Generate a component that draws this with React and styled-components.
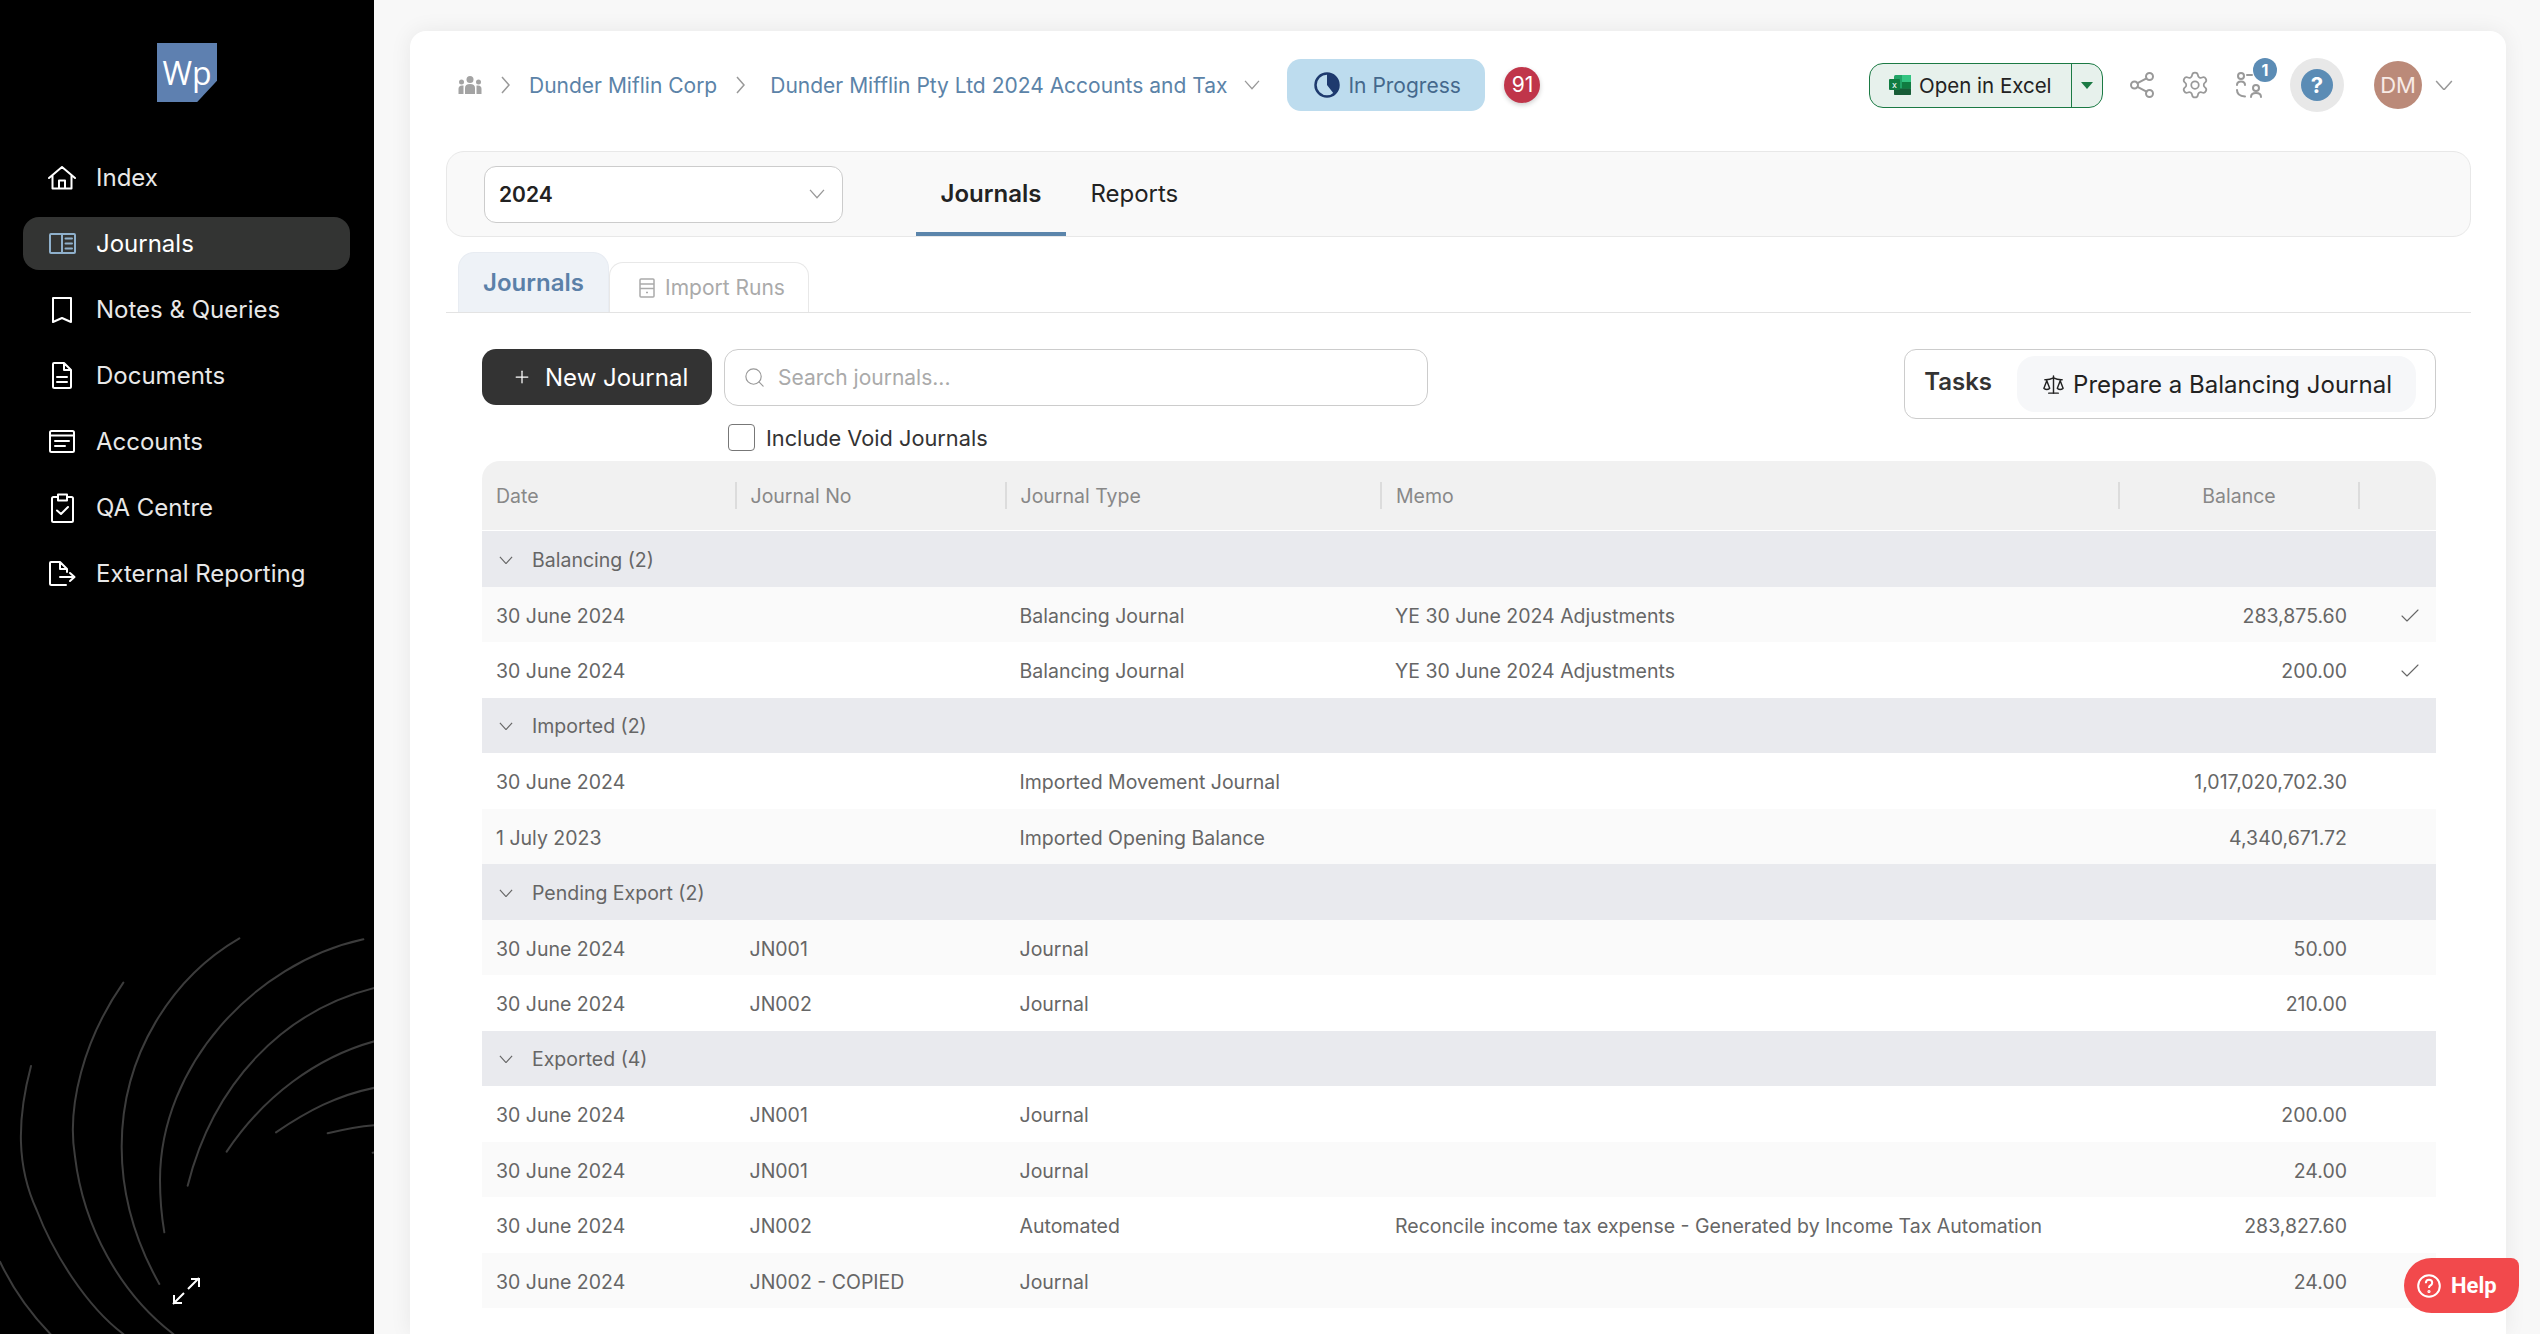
import React from 'react'
import styled, { createGlobalStyle } from 'styled-components'
import { Check, Plus, Scale, Search, Settings } from 'lucide-react'

const GlobalStyle = createGlobalStyle`
  html, body {
    margin: 0;
    height: 100%;
    overflow: hidden;
    background: #f8f8f8;
    font-family: Inter, "Liberation Sans", sans-serif;
  }
  * { box-sizing: border-box; }
`

const Page = styled.div`
  display: flex;
  height: 100vh;
`

/* sidebar */

const Sidebar = styled.aside`
  position: relative;
  width: 374px;
  flex-shrink: 0;
  background: #000;
  display: flex;
  flex-direction: column;
  padding: 43px 24px 29px 23px;
  overflow: hidden;
`

const Logo = styled.div`
  width: 60px;
  height: 59px;
  margin-left: 134px;
  background: #5e80b0;
  clip-path: polygon(0 0, 100% 0, 100% 64%, 67% 100%, 0 100%);
  color: #fff;
  font-family: "Open Sans", sans-serif;
  font-size: 32px;
  line-height: 59px;
  text-align: center;
`

const NavList = styled.nav`
  display: flex;
  flex-direction: column;
  gap: 13px;
  margin-top: 49px;
`

const NavItem = styled.a`
  display: flex;
  align-items: center;
  gap: 19px;
  height: 53px;
  padding-left: 24px;
  border-radius: 16px;
  background: ${p => (p.$active ? '#333433' : 'transparent')};
  color: ${p => (p.$active ? '#fff' : '#e8e8e8')};
  font-size: 24px;
  position: relative;
  z-index: 1;
`

const NavGlyph = styled.span`
  width: 30px;
  display: flex;
  justify-content: center;
  svg {
    fill: none;
    stroke: ${p => p.$color || '#fff'};
    stroke-width: 2;
    stroke-linejoin: round;
    stroke-linecap: round;
  }
`

const Spiral = styled.svg`
  position: absolute;
  left: 0;
  bottom: 0;
  width: 374px;
  height: 454px;
  fill: none;
  stroke: #3c3c3c;
  stroke-width: 6;
  stroke-linecap: round;
`

const Expand = styled.svg`
  position: relative;
  margin-top: auto;
  align-self: center;
  margin-left: -1px;
  fill: none;
  stroke: #fff;
  stroke-width: 2;
`

const spiralArcs = [
  'M93 558 C50 720 50 860 110 990 C160 1120 260 1280 370 1362',
  'M370 308 C250 480 200 680 225 830 C250 1040 360 1240 520 1362',
  'M718 175 C520 290 365 520 365 800 C365 960 415 1100 478 1212',
  'M1090 178 C760 250 480 560 480 900 C480 960 485 1010 493 1057',
  'M1130 322 C850 390 640 610 563 917',
  'M1130 482 C950 530 790 650 680 815',
  'M1130 622 C1010 645 920 695 828 757',
  'M1130 735 C1070 738 1030 748 983 760',
  'M1118 818 L1130 816',
  'M0 1145 C40 1230 100 1310 155 1366',
]

const navItems = [
  {
    label: 'Index',
    icon: (
      <svg width="28" height="24" viewBox="0 0 28 24">
        <path d="M1 12 L14 1 L27 12 M4.5 9.5 V22.5 H23.5 V9.5 M11 22.5 V14.5 H17 V22.5" />
      </svg>
    ),
  },
  {
    label: 'Journals',
    active: true,
    color: '#8fb0cc',
    icon: (
      <svg width="27" height="21" viewBox="0 0 27 21">
        <rect x="1" y="1" width="25" height="19" rx="1" />
        <path d="M13 1 V20 M16.5 5.5 H23 M16.5 10.5 H23 M16.5 15.5 H23" />
      </svg>
    ),
  },
  {
    label: 'Notes & Queries',
    icon: (
      <svg width="20" height="26" viewBox="0 0 20 26">
        <path d="M1 1 H19 V25 L10 21 L1 25 Z" />
      </svg>
    ),
  },
  {
    label: 'Documents',
    icon: (
      <svg width="20" height="27" viewBox="0 0 20 27">
        <path d="M2 1 H12 L19 8 V24.5 Q19 26 17.5 26 H2.5 Q1 26 1 24.5 V2 Q1 1 2 1 Z M12 1 V8 H19 M5 15 H15 M5 20 H15" />
      </svg>
    ),
  },
  {
    label: 'Accounts',
    icon: (
      <svg width="26" height="23" viewBox="0 0 26 23">
        <rect x="1" y="1" width="24" height="21" rx="1.5" />
        <path d="M1 5.5 H25 M6 11 H20 M6 16 H16" />
      </svg>
    ),
  },
  {
    label: 'QA Centre',
    icon: (
      <svg width="23" height="30" viewBox="0 0 23 30">
        <path d="M7 4 H2.5 Q1 4 1 5.5 V27.5 Q1 29 2.5 29 H20.5 Q22 29 22 27.5 V5.5 Q22 4 20.5 4 H16 M7 1.5 H16 V7.5 H7 Z M6 17.5 L10 21 L17 14" />
      </svg>
    ),
  },
  {
    label: 'External Reporting',
    icon: (
      <svg width="27" height="25" viewBox="0 0 27 25">
        <path d="M17 24 H2.5 Q1 24 1 22.5 V2 Q1 1 2 1 H11 L18 8 V11 M11 1 V8 H18 M11 16 H25 M21 12 L25.5 16 L21 20" />
      </svg>
    ),
  },
]

/* card + header */

const Main = styled.main`
  flex: 1;
  min-width: 0;
  padding: 31px 34px 0 36px;
`

const Card = styled.div`
  height: 100%;
  padding: 27px 35px 0 36px;
  background: #fff;
  border-radius: 16px 16px 0 0;
  box-shadow: 0 0 22px rgba(0, 0, 0, 0.07);
`

const Header = styled.header`
  display: flex;
  align-items: center;
  justify-content: space-between;
  height: 54px;
  padding: 0 18px 0 12px;
`

const HeaderGroup = styled.div`
  display: flex;
  align-items: center;
`

const CrumbLink = styled.span`
  color: #5b83a8;
  font-size: 21px;
  white-space: nowrap;
`

const CrumbSep = styled.svg`
  margin: 0 ${p => p.$gap || 19}px 0 19px;
  fill: none;
  stroke: #999;
  stroke-width: 1.5;
`

const Chevron = styled.svg`
  flex-shrink: 0;
  margin-left: ${p => p.$left || 0}px;
  fill: none;
  stroke: ${p => p.$color || '#999'};
  stroke-width: 1.5;
`

const StatusPill = styled.div`
  display: flex;
  align-items: center;
  gap: 8px;
  width: 198px;
  height: 52px;
  margin-left: 27px;
  padding-left: 27px;
  border-radius: 14px;
  background: #bddcee;
  color: #44688c;
  font-size: 21px;
`

const CountBadge = styled.div`
  width: 36px;
  height: 36px;
  margin-left: 19px;
  border-radius: 50%;
  background: #c0354a;
  box-shadow: 0 2px 5px rgba(0, 0, 0, 0.2);
  color: #fff;
  font-size: 21px;
  line-height: 36px;
  text-align: center;
`

const Actions = styled.div`
  display: flex;
  align-items: center;
  gap: 28px;
`

const ExcelButton = styled.div`
  display: flex;
  align-items: stretch;
  width: 234px;
  height: 45px;
  border: 1.5px solid #1b7a44;
  border-radius: 14px;
  background: #e7f1ec;
  color: #222;
  font-size: 20.5px;
`

const ExcelMain = styled.div`
  flex: 1;
  display: flex;
  align-items: center;
  gap: 8px;
  padding-left: 19px;
  border-right: 1.5px solid #1b7a44;
`

const ExcelCaret = styled.div`
  width: 30px;
  display: flex;
  align-items: center;
  justify-content: center;
  &::after {
    content: '';
    border-top: 7px solid #1b7a44;
    border-left: 6px solid transparent;
    border-right: 6px solid transparent;
  }
`

const IconSlot = styled.div`
  position: relative;
  width: ${p => p.$width || 26}px;
  height: 26px;
  margin-left: ${p => p.$left || 0}px;
  display: flex;
  align-items: center;
  justify-content: center;
  color: #999;
  svg { flex-shrink: 0; }
`

const LineIcon = styled.svg`
  fill: none;
  stroke: #999;
  stroke-width: 2;
  stroke-linecap: round;
`

const SlotBadge = styled.span`
  position: absolute;
  left: 17px;
  top: -14px;
  width: 24px;
  height: 24px;
  border-radius: 50%;
  background: #5b8cb5;
  color: #fff;
  font-size: 16px;
  font-weight: 700;
  line-height: 24px;
  text-align: center;
`

const HelpRing = styled.div`
  width: 54px;
  height: 54px;
  margin-right: 2px;
  border-radius: 50%;
  background: #e8e8e8;
  display: flex;
  align-items: center;
  justify-content: center;
`

const HelpDot = styled.div`
  width: 32px;
  height: 32px;
  border-radius: 50%;
  background: #5b8cb5;
  color: #fff;
  font-size: 22px;
  font-weight: 700;
  line-height: 32px;
  text-align: center;
`

const UserMenu = styled.div`
  display: flex;
  align-items: center;
  gap: 13px;
`

const Avatar = styled.div`
  width: 48px;
  height: 48px;
  border-radius: 50%;
  background: #bb8a79;
  color: #f8ebe6;
  font-size: 22px;
  line-height: 48px;
  text-align: center;
`

/* year bar + tabs */

const YearBar = styled.div`
  display: flex;
  align-items: stretch;
  height: 86px;
  margin-top: 39px;
  padding-left: 37px;
  background: #f9f9f9;
  border: 1.5px solid #e8e8e8;
  border-radius: 18px;
`

const YearSelect = styled.div`
  align-self: center;
  display: flex;
  align-items: center;
  justify-content: space-between;
  width: 359px;
  height: 57px;
  padding: 0 17px 0 14px;
  background: #fff;
  border: 1.5px solid #ccc;
  border-radius: 12px;
  color: #222;
  font-size: 21px;
  font-weight: 600;
`

const TopTabs = styled.div`
  display: flex;
  margin-left: 73px;
`

const TopTab = styled.div`
  display: flex;
  align-items: center;
  padding: 2px 24.5px 0;
  border-bottom: 4px solid ${p => (p.$active ? '#5b85ab' : 'transparent')};
  color: #222;
  font-size: 24px;
  font-weight: ${p => (p.$active ? 600 : 400)};
`

const SubTabs = styled.div`
  display: flex;
  align-items: flex-end;
  height: 61px;
  margin-top: 15px;
  padding-left: 12px;
  border-bottom: 1.5px solid #e3e3e3;
`

const ActiveSubTab = styled.div`
  width: 151px;
  height: 60px;
  padding-left: 24px;
  background: #eef2f7;
  border: 1.5px solid #e8ecf2;
  border-bottom: 0;
  border-radius: 16px 16px 0 0;
  color: #5b80a8;
  font-size: 24px;
  font-weight: 600;
  line-height: 59px;
`

const SubTab = styled.div`
  display: flex;
  align-items: center;
  gap: 10px;
  width: 200px;
  height: 50px;
  padding-left: 29px;
  border: 1.5px solid #e8e8e8;
  border-bottom: 0;
  border-radius: 14px 14px 0 0;
  color: #aaa;
  font-size: 21px;
`

/* toolbar */

const Toolbar = styled.div`
  display: flex;
  align-items: flex-start;
  justify-content: space-between;
  margin-top: 36px;
  padding: 0 35px 0 36px;
`

const ToolbarLeft = styled.div`
  display: grid;
  grid-template-columns: 230px 704px;
  column-gap: 12px;
  row-gap: 18px;
`

const NewButton = styled.div`
  display: flex;
  align-items: center;
  gap: 13px;
  height: 56px;
  padding-left: 30px;
  background: #333;
  border-radius: 14px;
  color: #fff;
  font-size: 24px;
`

const SearchBox = styled.div`
  display: flex;
  align-items: center;
  gap: 12px;
  height: 57px;
  padding-left: 18px;
  border: 1.5px solid #ccc;
  border-radius: 14px;
  color: #aaa;
  font-size: 21px;
`

const VoidOption = styled.label`
  grid-column: 2;
  display: flex;
  align-items: center;
  gap: 11px;
  padding-left: 4px;
  color: #333;
  font-size: 21.75px;
`

const CheckBox = styled.span`
  width: 27px;
  height: 27px;
  border: 1.5px solid #777;
  border-radius: 4px;
  background: #fff;
`

const TaskBox = styled.div`
  display: flex;
  align-items: center;
  gap: 25px;
  height: 70px;
  padding: 0 19px 0 19px;
  border: 1.5px solid #ccc;
  border-radius: 12px;
`

const TaskTitle = styled.span`
  color: #333;
  font-size: 24px;
  font-weight: 600;
  margin-top: -6px;
`

const TaskButton = styled.div`
  display: flex;
  align-items: center;
  gap: 8px;
  height: 56px;
  padding: 0 24px 0 25px;
  background: #f6f7f9;
  border-radius: 18px;
  color: #222;
  font-size: 24px;
  white-space: nowrap;
`

/* table */

const columns = '252.5px 270px 375.5px 738px 240px 77px'

const Table = styled.div`
  margin: 10px 35px 0 36px;
`

const HeadRow = styled.div`
  display: grid;
  grid-template-columns: ${columns};
  align-items: center;
  height: 70px;
  padding-bottom: 1px;
  background: #f1f1f1;
  border-bottom: 1px solid #fff;
  border-radius: 18px 18px 0 0;
  color: #888;
  font-size: 19.5px;
`

const HeadCell = styled.div`
  height: 27px;
  padding-left: ${p => (p.$center ? 0 : 14)}px;
  line-height: 29px;
  text-align: ${p => (p.$center ? 'center' : 'left')};
  border-left: ${p => (p.$first ? '0' : '2px solid #dcdcdc')};
`

const GroupRow = styled.div`
  display: flex;
  align-items: center;
  gap: 19px;
  height: 55.5px;
  padding: 2px 0 0 17px;
  background: #e9eaee;
  color: #666;
  font-size: 19.5px;
`

const DataRow = styled.div`
  display: grid;
  grid-template-columns: ${columns};
  align-items: center;
  height: 55.5px;
  padding-top: 3px;
  background: ${p => (p.$striped ? '#fafafa' : '#fff')};
  color: #666;
  font-size: 19.5px;
`

const Cell = styled.div`
  padding-left: ${p => (p.$first ? 14 : 15)}px;
  white-space: nowrap;
`

const AmountCell = styled.div`
  padding-right: 11px;
  text-align: right;
`

const CheckCell = styled.div`
  display: flex;
  padding-left: 40px;
  color: #666;
`

const HelpFab = styled.div`
  position: fixed;
  right: 21px;
  bottom: 21px;
  display: flex;
  align-items: center;
  gap: 10px;
  width: 115px;
  height: 55px;
  padding-left: 13px;
  background: #f2494c;
  border-radius: 28px 8px 28px 28px;
  color: #fff;
  font-family: Roboto, sans-serif;
  font-size: 22px;
  font-weight: 700;
`

const groups = [
  {
    name: 'Balancing (2)',
    rows: [
      ['30 June 2024', '', 'Balancing Journal', 'YE 30 June 2024 Adjustments', '283,875.60', true],
      ['30 June 2024', '', 'Balancing Journal', 'YE 30 June 2024 Adjustments', '200.00', true],
    ],
  },
  {
    name: 'Imported (2)',
    rows: [
      ['30 June 2024', '', 'Imported Movement Journal', '', '1,017,020,702.30'],
      ['1 July 2023', '', 'Imported Opening Balance', '', '4,340,671.72'],
    ],
  },
  {
    name: 'Pending Export (2)',
    rows: [
      ['30 June 2024', 'JN001', 'Journal', '', '50.00'],
      ['30 June 2024', 'JN002', 'Journal', '', '210.00'],
    ],
  },
  {
    name: 'Exported (4)',
    rows: [
      ['30 June 2024', 'JN001', 'Journal', '', '200.00'],
      ['30 June 2024', 'JN001', 'Journal', '', '24.00'],
      ['30 June 2024', 'JN002', 'Automated', 'Reconcile income tax expense - Generated by Income Tax Automation', '283,827.60'],
      ['30 June 2024', 'JN002 - COPIED', 'Journal', '', '24.00'],
    ],
  },
]

const Down = ({ size = 18, left, color }) => (
  <Chevron $left={left} $color={color} width={size} height={size * 0.6} viewBox="0 0 18 11">
    <path d="M1 1 L9 10 L17 1" />
  </Chevron>
)

const TableRows = () => {
  let index = 0
  return groups.map(group => {
    index += 1
    return (
      <React.Fragment key={group.name}>
        <GroupRow>
          <Down size={14} color="#666" />
          {group.name}
        </GroupRow>
        {group.rows.map((row, i) => {
          index += 1
          return (
            <DataRow key={i} $striped={index % 2 === 0}>
              <Cell $first>{row[0]}</Cell>
              <Cell>{row[1]}</Cell>
              <Cell>{row[2]}</Cell>
              <Cell>{row[3]}</Cell>
              <AmountCell>{row[4]}</AmountCell>
              <CheckCell>{row[5] && <Check size={24} strokeWidth={1.1} />}</CheckCell>
            </DataRow>
          )
        })}
      </React.Fragment>
    )
  })
}

const App = () => {
  return (
    <Page>
      <GlobalStyle />
      <Sidebar>
        <Spiral viewBox="0 0 1122 1362">
          {spiralArcs.map(d => <path key={d} d={d} />)}
        </Spiral>
        <Logo>Wp</Logo>
        <NavList>
          {navItems.map(item => (
            <NavItem key={item.label} $active={item.active}>
              <NavGlyph $color={item.color}>{item.icon}</NavGlyph>
              {item.label}
            </NavItem>
          ))}
        </NavList>
        <Expand width="28" height="28" viewBox="0 0 28 28">
          <path d="M19 2 H27 V10 M27 1 L16 12 M2 18 V26 H10 M1 27 L12 16" />
        </Expand>
      </Sidebar>

      <Main>
        <Card>
          <Header>
            <HeaderGroup>
              <svg width="24" height="18" viewBox="0 0 24 18" fill="#a3a3a3">
                <circle cx="12" cy="3.5" r="3.5" />
                <circle cx="3.5" cy="6" r="2.5" />
                <circle cx="20.5" cy="6" r="2.5" />
                <path d="M7 18 V12 Q7 8 12 8 Q17 8 17 12 V18 Z" />
                <path d="M0.5 18 V13 Q0.5 9.5 4 9.5 H5.5 Q5.5 14 5.5 18 Z" />
                <path d="M23.5 18 V13 Q23.5 9.5 20 9.5 H18.5 Q18.5 14 18.5 18 Z" />
              </svg>
              <CrumbSep width="9" height="18" viewBox="0 0 9 18"><path d="M1 1 L8 9 L1 17" /></CrumbSep>
              <CrumbLink>Dunder Miflin Corp</CrumbLink>
              <CrumbSep $gap={25} width="9" height="18" viewBox="0 0 9 18"><path d="M1 1 L8 9 L1 17" /></CrumbSep>
              <CrumbLink>Dunder Mifflin Pty Ltd 2024 Accounts and Tax</CrumbLink>
              <Down size={16} left={17} />
              <StatusPill>
                <svg width="26" height="26" viewBox="0 0 26 26">
                  <circle cx="13" cy="13" r="11.5" fill="none" stroke="#1e3a6e" strokeWidth="2.5" />
                  <path d="M13 13 V1.5 A11.5 11.5 0 0 1 20 22 Z" fill="#1e3a6e" />
                </svg>
                In Progress
              </StatusPill>
              <CountBadge>91</CountBadge>
            </HeaderGroup>

            <Actions>
              <ExcelButton>
                <ExcelMain>
                  <svg width="22" height="20" viewBox="0 0 22 20">
                    <rect x="5" width="17" height="20" rx="1.5" fill="#21a366" />
                    <rect x="13" width="9" height="7" fill="#33c481" />
                    <rect x="13" y="7" width="9" height="6.5" fill="#107c41" />
                    <rect x="5" y="13.5" width="17" height="6.5" rx="1" fill="#185c37" />
                    <rect y="4" width="11" height="11" rx="1" fill="#107c41" />
                    <text x="5.5" y="12.5" fontSize="9" fill="#fff" textAnchor="middle" fontFamily="Inter">x</text>
                  </svg>
                  Open in Excel
                </ExcelMain>
                <ExcelCaret />
              </ExcelButton>
              <IconSlot $width={24} $left={-1}>
                <LineIcon width="24" height="26" viewBox="0 0 24 26">
                  <circle cx="4.5" cy="13" r="3.5" />
                  <circle cx="19.5" cy="4.5" r="3.5" />
                  <circle cx="19.5" cy="21.5" r="3.5" />
                  <path d="M7.5 11.2 L16.5 6.3 M7.5 14.8 L16.5 19.7" />
                </LineIcon>
              </IconSlot>
              <IconSlot>
                <Settings size={30} strokeWidth={1.4} />
              </IconSlot>
              <IconSlot>
                <LineIcon width="26" height="26" viewBox="0 0 26 26">
                  <circle cx="5" cy="4" r="3" />
                  <path d="M1 13 Q1 9.5 5 9.5 Q9 9.5 9 13 M11 3 H16 M1 18 Q1 24 9 24.5" />
                  <circle cx="20" cy="16" r="3" />
                  <path d="M15 25 Q15 21 20 21 Q25 21 25 25" />
                </LineIcon>
                <SlotBadge>1</SlotBadge>
              </IconSlot>
              <HelpRing><HelpDot>?</HelpDot></HelpRing>
              <UserMenu>
                <Avatar>DM</Avatar>
                <Down size={18} />
              </UserMenu>
            </Actions>
          </Header>

          <YearBar>
            <YearSelect>
              2024
              <Down size={16} />
            </YearSelect>
            <TopTabs>
              <TopTab $active>Journals</TopTab>
              <TopTab>Reports</TopTab>
            </TopTabs>
          </YearBar>

          <SubTabs>
            <ActiveSubTab>Journals</ActiveSubTab>
            <SubTab>
              <svg width="16" height="20" viewBox="0 0 16 20" fill="none" stroke="#aaa" strokeWidth="1.5">
                <rect x="1" y="1" width="14" height="18" rx="1" />
                <path d="M1 6 H15 M1 10.5 H15 M7 14.5 H9" />
              </svg>
              Import Runs
            </SubTab>
          </SubTabs>

          <Toolbar>
            <ToolbarLeft>
              <NewButton>
                <Plus size={20} strokeWidth={1.5} />
                New Journal
              </NewButton>
              <SearchBox>
                <Search size={23} strokeWidth={1.2} color="#999" />
                Search journals...
              </SearchBox>
              <VoidOption>
                <CheckBox />
                Include Void Journals
              </VoidOption>
            </ToolbarLeft>
            <TaskBox>
              <TaskTitle>Tasks</TaskTitle>
              <TaskButton>
                <Scale size={23} strokeWidth={1.5} />
                Prepare a Balancing Journal
              </TaskButton>
            </TaskBox>
          </Toolbar>

          <Table>
            <HeadRow>
              <HeadCell $first>Date</HeadCell>
              <HeadCell>Journal No</HeadCell>
              <HeadCell>Journal Type</HeadCell>
              <HeadCell>Memo</HeadCell>
              <HeadCell $center>Balance</HeadCell>
              <HeadCell />
            </HeadRow>
            <TableRows />
          </Table>
        </Card>
      </Main>

      <HelpFab>
        <svg width="24" height="24" viewBox="0 0 24 24" fill="none" stroke="#fff" strokeWidth="2">
          <circle cx="12" cy="12" r="10.8" />
          <path d="M8.8 9.2 Q9 5.8 12 5.8 Q15.2 5.8 15.2 8.8 Q15.2 10.6 13.4 11.5 Q12 12.2 12 14" />
          <circle cx="12" cy="17.5" r="0.6" />
        </svg>
        Help
      </HelpFab>
    </Page>
  )
}

export default App
